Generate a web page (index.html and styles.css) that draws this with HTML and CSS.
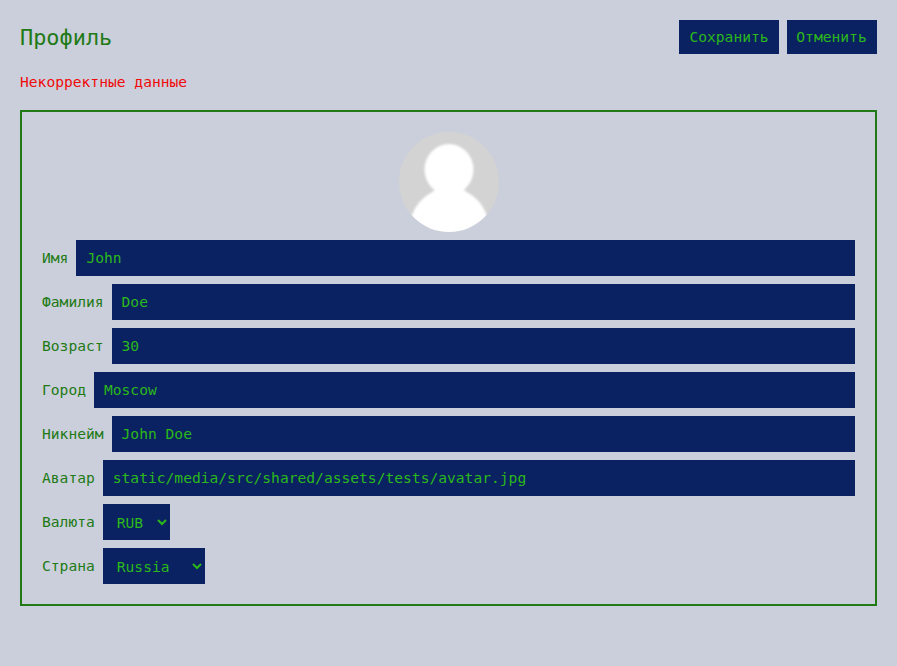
FILE: index.html
```html
<!DOCTYPE html>
<html lang="ru">
<head>
<meta charset="utf-8">
<title>Профиль</title>
<link rel="stylesheet" href="styles.css">
</head>
<body>
<main class="page">
  <header class="header">
    <h1 class="title">Профиль</h1>
    <div class="actions">
      <button class="button" type="button">Сохранить</button>
      <button class="button" type="button">Отменить</button>
    </div>
  </header>
  <p class="error">Некорректные данные</p>
  <section class="card">
    <svg class="avatar" viewBox="0 0 100 100" aria-hidden="true">
      <defs>
        <clipPath id="round"><circle cx="50" cy="50" r="50"/></clipPath>
        <filter id="soft"><feGaussianBlur stdDeviation="0.8"/></filter>
      </defs>
      <g clip-path="url(#round)">
        <rect width="100" height="100" fill="#d3d3d3"/>
        <g fill="#fff" filter="url(#soft)">
          <ellipse cx="50" cy="37.5" rx="24.5" ry="25.5"/>
          <path d="M34 54 L66 54 Q63 57 67 59.5 Q83 68 88 84 L90 108 L10 108 L12.500 84 Q18 68 34 59.500 Q38 57 34 54Z"/>
        </g>
      </g>
    </svg>
    <label class="field"><span class="label">Имя</span><input class="input" value="John"></label>
    <label class="field"><span class="label">Фамилия</span><input class="input" value="Doe"></label>
    <label class="field"><span class="label">Возраст</span><input class="input" value="30"></label>
    <label class="field"><span class="label">Город</span><input class="input" value="Moscow"></label>
    <label class="field"><span class="label">Никнейм</span><input class="input" value="John Doe"></label>
    <label class="field"><span class="label">Аватар</span><input class="input" value="static/media/src/shared/assets/tests/avatar.jpg"></label>
    <label class="field"><span class="label">Валюта</span><select class="select currency"><option>RUB</option></select></label>
    <label class="field"><span class="label">Страна</span><select class="select country"><option>Russia</option></select></label>
  </section>
</main>
</body>
</html>
```
FILE: styles.css
```css
* {
  box-sizing: border-box;
  margin: 0;
}

body {
  background: #cbcfdb;
  color: #217a15;
}

body,
.button,
.input,
.select {
  font: 14.61px/24px Consolas, "DejaVu Sans Mono", monospace;
}

.page {
  padding: 20px;
}

.header {
  display: flex;
  align-items: center;
  justify-content: space-between;
  height: 34px;
}

.title {
  padding-top: 2px;
  font-size: 21.9px;
  font-weight: 400;
  line-height: 32px;
}

.actions {
  display: flex;
  gap: 8px;
}

.button,
.input,
.select {
  border: 0;
  border-radius: 0;
  background: #0a2261;
  color: #2bb81a;
}

.button {
  width: 100px;
  height: 34px;
  padding: 0 10px;
}

.button:last-child {
  width: 90px;
  padding: 0 10px 0 9px;
}

.error {
  margin: 16px 0;
  color: #f00a0a;
}

.card {
  display: flex;
  flex-direction: column;
  gap: 8px;
  padding: 20px;
  border: 2px solid #217a15;
}

.avatar {
  align-self: center;
  width: 100px;
  height: 100px;
}

.field {
  display: flex;
  align-items: center;
  gap: 8px;
  height: 36px;
}

.input {
  flex: 1;
  min-width: 0;
  height: 36px;
  padding: 0 10px 2px;
}

.select {
  height: 36px;
  padding: 0 0 0 10px;
}

.currency {
  width: 67px;
}

.country {
  width: 102px;
}
```
